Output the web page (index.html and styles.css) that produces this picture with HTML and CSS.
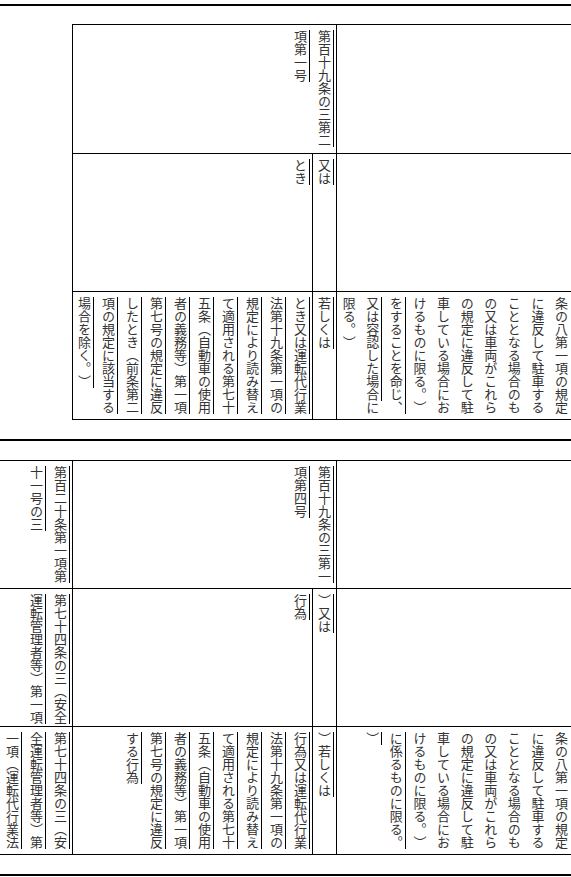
FILE: index.html
```html
<!DOCTYPE html>
<html lang="ja">
<head>
<meta charset="utf-8">
<title>読替表</title>
<link rel="stylesheet" href="styles.css">
</head>
<body>
<main class="page">
  <div class="rule"></div>
  <div class="frame frame-top">
    <div class="sheet sheet-top">
      <div class="cell span2"><span class="mark">第百十九条の三第二項第一号</span></div>
      <div class="cell cell-a"></div>

      <div class="cell"><span class="mark">とき</span></div>
      <div class="cell"><span class="mark">又は</span></div>
      <div class="cell cell-a"></div>

      <div class="cell"><span class="mark">とき又は運転代行業法第十九条第一項の規定により読み替えて適用される第七十五条（自動車の使用者の義務等）第一項第七号の規定に違反したとき（前条第二項の規定に該当する場合を除く。）</span></div>
      <div class="cell"><span class="mark">若しくは</span></div>
      <div class="cell cell-a">条の八第一項の規定に違反して駐車することとなる場合のもの又は車両がこれらの規定に違反して駐車している場合におけるものに限る。）<span class="mark">をすることを命じ、又は容認した場合</span>に限る。）</div>
    </div>
  </div>

  <div class="rule"></div>
  <div class="frame frame-bottom">
    <div class="sheet sheet-bottom">
      <div class="cell"><span class="mark">第百二十条第一項第十一号の三</span></div>
      <div class="cell span2"><span class="mark">第百十九条の三第一項第四号</span></div>
      <div class="cell cell-a"></div>

      <div class="cell"><span class="mark">第七十四条の三（安全運転管理者等）第一項</span></div>
      <div class="cell"><span class="mark">行為</span></div>
      <div class="cell"><span class="mark">）又は</span></div>
      <div class="cell cell-a"></div>

      <div class="cell"><span class="mark">第七十四条の三（安全運転管理者等）第一項（運転代行業法</span></div>
      <div class="cell"><span class="mark">行為又は運転代行業法第十九条第一項の規定により読み替えて適用される第七十五条（自動車の使用者の義務等）第一項第七号の規定に違反する行為</span></div>
      <div class="cell"><span class="mark">）若しくは</span></div>
      <div class="cell cell-a">条の八第一項の規定に違反して駐車することとなる場合のもの又は車両がこれらの規定に違反して駐車している場合におけるものに限る。）<span class="mark">に係るものに限る。）</span></div>
    </div>
  </div>
  <div class="rule"></div>
</main>
</body>
</html>
```

FILE: styles.css
```css
html, body {
  margin: 0;
  padding: 0;
  background: #fff;
  overflow: hidden;
}

.page {
  width: 571px;
  height: 877px;
  box-sizing: border-box;
  padding-top: 4px;
  overflow: hidden;
  font-family: "Noto Sans CJK JP", "Noto Sans CJK SC", sans-serif;
  color: #333;
}

.rule {
  height: 2px;
  background: #000;
}

.frame {
  display: flex;
  justify-content: flex-end;
  margin-right: -3px;
}

.frame-top {
  margin-top: 18px;
  margin-bottom: 19px;
}

.frame-bottom {
  margin-top: 19px;
  margin-bottom: 19px;
}

.sheet {
  display: grid;
  gap: 1px;
  background: #000;
  border: 1px solid #000;
  flex-shrink: 0;
}

.sheet-top {
  grid-template-columns: 239px 23px 236px;
  grid-template-rows: 128px 137px 127px;
}

.sheet-bottom {
  grid-template-columns: 96px 239px 23px 236px;
  grid-template-rows: 127px 137px 127px;
}

.cell {
  background: #fff;
  writing-mode: vertical-rl;
  font-size: 13px;
  line-height: 24px;
  padding-top: 5px;
  line-break: anywhere;
  text-spacing-trim: space-all;
  overflow: hidden;
}

.cell-a {
  line-height: 23.6px;
}

.span2 {
  grid-column: span 2;
}

.mark {
  background-image: linear-gradient(#000, #000);
  background-repeat: no-repeat;
  background-size: 1px 100%;
  background-position: right 0 top;
  -webkit-box-decoration-break: clone;
  box-decoration-break: clone;
}
```
